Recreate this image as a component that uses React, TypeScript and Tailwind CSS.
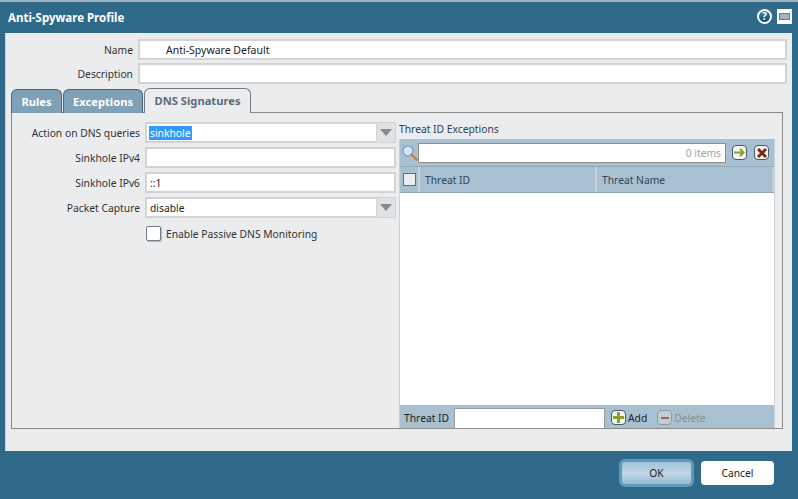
import React from 'react';

const fieldBox = 'h-[21px] bg-white border-2 border-[#d3d3d3] flex items-center px-[2px] text-[#222]';

function Arrow() {
  return (
    <div className="w-[20px] h-[21px] bg-[#e0e1e3] border border-[#d3d3d3] flex items-center justify-center">
      <svg width="12" height="7" viewBox="0 0 12 7">
        <path d="M0 0H12L6 7Z" fill="#7f8c94" />
      </svg>
    </div>
  );
}

function Label({ children }: { children: React.ReactNode }) {
  return <div className="w-[133px] text-right pr-[5px] text-[#333] shrink-0">{children}</div>;
}

function SelectField({ label, value, selected }: { label: string; value: string; selected?: boolean }) {
  return (
    <div className="flex items-center">
      <Label>{label}</Label>
      <div className="w-[251px] flex">
        <div className={`${fieldBox} flex-1 border-r-0`}>
          <span className={selected ? 'bg-[#3399ff] text-white px-[1px] leading-[14px]' : 'px-[1px]'}>{value}</span>
        </div>
        <Arrow />
      </div>
    </div>
  );
}

function TextField({ label, value }: { label: string; value?: string }) {
  return (
    <div className="flex items-center">
      <Label>{label}</Label>
      <div className={`${fieldBox} w-[251px]`}>
        <span className="px-[1px]">{value}</span>
      </div>
    </div>
  );
}

function IconFrame({ children, dim }: { children: React.ReactNode; dim?: boolean }) {
  return (
    <div
      className={`w-[15px] h-[15px] rounded-[4px] border flex items-center justify-center shrink-0 ${
        dim ? 'border-[#8d9aa5] bg-[#c3cdd6]' : 'border-[#44596a] bg-[#f4f5f2]'
      }`}
    >
      {children}
    </div>
  );
}

export default function App() {
  return (
    <div
      className="w-[798px] h-[499px] overflow-hidden bg-[#306a8a] flex flex-col text-[10.3px] leading-[14px]"
      style={{ fontFamily: '"Noto Sans", "DejaVu Sans", sans-serif' }}
    >
      {/* title bar */}
      <div className="h-[2px] bg-[#9fb4c0]" />
      <div className="h-[31px] flex items-center justify-between pl-[8px] pr-[6px]">
        <span className="text-white font-bold text-[11.5px]">Anti-Spyware Profile</span>
        <div className="flex items-center gap-[5px] mt-[-3px]">
          <div className="w-[15px] h-[15px] rounded-full bg-gradient-to-b from-[#2f7fb5] to-[#0b4f7d] border-2 border-white text-white font-bold text-[10px] leading-none flex items-center justify-center">
            ?
          </div>
          <div className="w-[15px] h-[15px] bg-white flex items-center justify-center">
            <div className="w-[11px] h-[7px] bg-[#9db4c3] border border-[#5c7f95]" />
          </div>
        </div>
      </div>

      {/* body */}
      <div className="ml-[5px] mr-[6px] h-[418px] bg-[#ebecee] border-l border-[#c9d4da] pt-[6px] px-[5px] flex flex-col">
        <div className="flex items-center mb-[3px]">
          <div className="w-[127px] pr-[5px] text-right text-[#333] shrink-0">Name</div>
          <div className="flex-1 h-[21px] bg-white border-2 border-[#d3d3d3] flex items-center pl-[26px] text-[#222] text-[10.5px]">
            Anti-Spyware Default
          </div>
        </div>
        <div className="flex items-center mb-[4px]">
          <div className="w-[127px] pr-[5px] text-right text-[#333] shrink-0">Description</div>
          <div className="flex-1 h-[21px] bg-white border-2 border-[#d3d3d3]" />
        </div>

        {/* tabs */}
        <div className="flex h-[25px] gap-[1px] items-end relative z-10 mb-[-1px] text-[11.2px]">
          <div className="w-[51px] h-[24px] bg-[#7ea1b7] border border-b-0 border-[#4d6576] rounded-t-[6px] text-white font-bold flex items-center justify-center">
            Rules
          </div>
          <div className="w-[80px] h-[24px] bg-[#7ea1b7] border border-b-0 border-[#4d6576] rounded-t-[6px] text-white font-bold flex items-center justify-center">
            Exceptions
          </div>
          <div className="w-[107px] h-[25px] bg-[#ebecee] border border-b-0 border-[#6b7a85] rounded-t-[6px] text-[#5b6b7a] font-bold flex items-center justify-center">
            DNS Signatures
          </div>
        </div>

        {/* tab content */}
        <div className="w-[772px] h-[317px] border border-[#8a8a8a] flex">
          <div className="w-[387px] pt-[9px] flex flex-col gap-[4px]">
            <SelectField label="Action on DNS queries" value="sinkhole" selected />
            <TextField label="Sinkhole IPv4" />
            <TextField label="Sinkhole IPv6" value="::1" />
            <SelectField label="Packet Capture" value="disable" />
            <div className="flex items-center pl-[134px] mt-[3px] gap-[5px]">
              <div className="w-[15px] h-[15px] bg-white border border-[#6f7c86] rounded-[2px] shadow-[1px_1px_1px_#b9b9b9]" />
              <span className="text-[#333] mt-[2px]">Enable Passive DNS Monitoring</span>
            </div>
          </div>

          <div className="w-[376px] flex flex-col">
            <div className="h-[26px] pt-[9px] text-[#25455c] leading-[14px]">Threat ID Exceptions</div>
            <div className="flex-1 flex flex-col border-x border-[#c9d2d9]">
              <div className="h-[27px] bg-[#a9c0d0] flex items-center pl-[2px] pr-[4px] shrink-0">
                <svg width="16" height="16" viewBox="0 0 16 16" className="shrink-0">
                  <circle cx="6" cy="6" r="5" fill="#d5e6f8" stroke="#7ea3cf" strokeWidth="1.4" />
                  <path d="M9.5 9.5L14.5 14.5" stroke="#c08040" strokeWidth="2.4" strokeLinecap="round" />
                </svg>
                <div className="w-[308px] h-[20px] bg-white border border-[#8f8f8f] flex items-center justify-end pr-[4px] text-[#a3a3a3]">
                  0 items
                </div>
                <div className="ml-[6px]">
                  <IconFrame>
                    <svg width="11" height="9" viewBox="0 0 11 9">
                      <path d="M0 4.5H9M6 1L9.5 4.5L6 8" fill="none" stroke="#8aa02c" strokeWidth="2" />
                    </svg>
                  </IconFrame>
                </div>
                <div className="ml-[7px]">
                  <IconFrame>
                    <svg width="10" height="10" viewBox="0 0 10 10">
                      <path d="M1 1L9 9M9 1L1 9" stroke="#7c2a10" strokeWidth="3" />
                    </svg>
                  </IconFrame>
                </div>
              </div>
              <div className="h-[27px] bg-[#a9c0d0] border-t border-b border-[#8ea8b9] flex items-center text-[#30475a] shrink-0">
                <div className="w-[20px] h-full flex items-center justify-center border-r-2 border-[#c3d2dd] shrink-0">
                  <div className="w-[13px] h-[13px] bg-[#e9edf0] border border-[#5f6d78]" />
                </div>
                <div className="w-[177px] h-full flex items-center pl-[5px] border-r-2 border-[#c3d2dd] shrink-0">Threat ID</div>
                <div className="flex-1 h-full flex items-center pl-[5px] border-r-2 border-[#c3d2dd]">Threat Name</div>
              </div>
              <div className="flex-1 bg-white" />
              <div className="h-[23px] bg-[#a9c0d0] flex items-end pl-[4px] shrink-0 text-[#222]">
                <div className="h-[21px] flex items-center">
                  <span className="w-[46px] shrink-0">Threat ID</span>
                  <div className="ml-[4px] w-[151px] h-[20px] self-end bg-white border border-b-0 border-[#9a9a9a]" />
                  <div className="ml-[6px]">
                    <IconFrame>
                      <svg width="11" height="11" viewBox="0 0 11 11">
                        <path d="M5.5 0V11M0 5.5H11" stroke="#8aa02c" strokeWidth="3" />
                      </svg>
                    </IconFrame>
                  </div>
                  <span className="ml-[2px]">Add</span>
                  <div className="ml-[10px]">
                    <IconFrame dim>
                      <div className="w-[8px] h-[2px] bg-[#96685e]" />
                    </IconFrame>
                  </div>
                  <span className="ml-[2px] text-[#8b8f93]">Delete</span>
                </div>
              </div>
            </div>
          </div>
        </div>
      </div>

      {/* footer */}
      <div className="flex-1 flex items-start justify-end pt-[8px] pr-[24px] gap-[7px]">
        <button className="w-[75px] h-[28px] rounded-[6px] border-[3px] border-[#5f99bd] bg-gradient-to-b from-[#9fc3d9] via-[#c0d7e5] to-[#96bcd3] text-[#222]">
          OK
        </button>
        <button className="w-[73px] h-[24px] mt-[2px] rounded-[4px] bg-white text-[#222]">Cancel</button>
      </div>
    </div>
  );
}
